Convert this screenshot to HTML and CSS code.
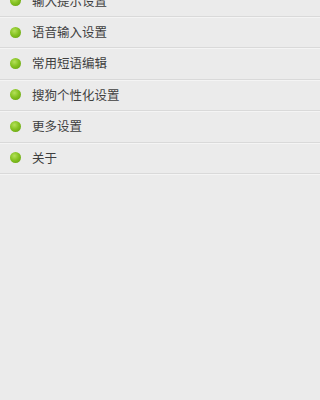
FILE: index.html
```html
<!DOCTYPE html>
<html lang="zh">
<head>
<meta charset="utf-8">
<link rel="stylesheet" href="styles.css">
</head>
<body>
<div class="list">
  <div class="row"><span class="dot"></span><span class="label">输入提示设置</span></div>
  <div class="row"><span class="dot"></span><span class="label">语音输入设置</span></div>
  <div class="row"><span class="dot"></span><span class="label">常用短语编辑</span></div>
  <div class="row"><span class="dot"></span><span class="label">搜狗个性化设置</span></div>
  <div class="row"><span class="dot"></span><span class="label">更多设置</span></div>
  <div class="row"><span class="dot"></span><span class="label">关于</span></div>
</div>
</body>
</html>
```
FILE: styles.css
```css
html, body {
  margin: 0;
  padding: 0;
  background: #ebebeb;
  height: 100%;
  overflow: hidden;
}
body {
  font-family: "Noto Sans CJK SC", "Noto Sans", sans-serif;
}
.list {
  margin-top: -14.4px;
  display: flex;
  flex-direction: column;
}
.row {
  height: 31.4px;
  box-sizing: border-box;
  border-bottom: 1px solid #d9d9d9;
  box-shadow: 0 1px 0 #f4f4f4;
  display: flex;
  align-items: center;
  padding-left: 10px;
}
.dot {
  width: 11px;
  height: 11px;
  border-radius: 50%;
  background: radial-gradient(circle at 40% 35%, #b4e05a 0%, #86c322 45%, #5f9a0e 100%);
  flex: none;
}
.label {
  margin-left: 11px;
  font-size: 12.5px;
  color: #3f3f3f;
  line-height: 1;
}
```
